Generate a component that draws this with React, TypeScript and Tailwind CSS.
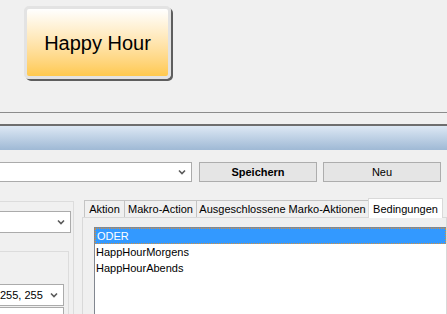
import React from "react";

function Chevron({ className = "" }: { className?: string }) {
	return (
		<svg width="8" height="6" viewBox="0 0 8 6" className={className}>
			<path d="M1 1.5 L4 4.5 L7 1.5" stroke="#5a5a5a" strokeWidth="1.6" fill="none" />
		</svg>
	);
}

function Combo({
	width,
	height,
	text,
}: {
	width: string;
	height: string;
	text?: string;
}) {
	return (
		<div
			className={`${width} ${height} bg-white border border-l-0 border-[#ababab] flex items-center justify-between pr-[5px]`}
		>
			<span className="text-[11px] text-black leading-none">{text}</span>
			<Chevron />
		</div>
	);
}

const tabs = [
	{ label: "Aktion", w: "w-[41px]" },
	{ label: "Makro-Action", w: "w-[73px]" },
	{ label: "Ausgeschlossene Marko-Aktionen", w: "w-[173px]" },
];

const items = ["ODER", "HappHourMorgens", "HappHourAbends"];

export default function App() {
	return (
		<div className="w-[447px] h-[314px] overflow-hidden bg-[#f0f0f0] font-['Liberation_Sans',Arial,sans-serif] text-[11px] text-black">
			{/* top area with the big button */}
			<div className="h-[112px] pt-[6px] pl-[24px]">
				<div className="w-[147px] h-[73px] rounded-[5px] border-[3px] border-[#e3e3e3] shadow-[2px_2px_0_#5e5e5e] bg-gradient-to-b from-white to-[#ffc94d] flex items-center justify-center">
					<span className="text-[20px] leading-none text-black">Happy Hour</span>
				</div>
			</div>
			<div className="h-px bg-[#8c8c8c]" />
			<div className="h-[11px]" />
			<div className="h-[2px] bg-[#6e6e6e]" />
			<div className="h-[24px] bg-gradient-to-b from-[#dde8f4] to-[#9fb9d5]" />

			{/* toolbar row */}
			<div className="flex mt-[12px] h-[20px]">
				<Combo width="w-[192px]" height="h-[20px]" />
				<button className="ml-[7px] w-[118px] h-[20px] border border-[#adadad] bg-[#e5e5e5] font-bold text-[11px]">
					Speichern
				</button>
				<button className="ml-[6px] w-[118px] h-[20px] border border-[#adadad] bg-[#e5e5e5] text-[11px]">
					Neu
				</button>
			</div>

			<div className="flex">
				{/* left column */}
				<div className="w-[74px] pt-[19px] shrink-0">
					<div className="w-[74px] border-t border-r border-[#dcdcdc] pt-[9px] h-[120px]">
						<Combo width="w-[71px]" height="h-[22px]" />
						<div className="mt-[18px] w-[69px] border-t border-r border-[#dcdcdc] pt-[32px] h-[80px]">
							<Combo width="w-[64px]" height="h-[22px]" text="255, 255" />
							<div className="mt-px w-[64px] h-[20px] bg-white border border-l-0 border-[#ababab]" />
						</div>
					</div>
				</div>

				{/* tab control */}
				<div className="ml-[8px] w-[365px] shrink-0 pt-[15px]">
					<div className="flex items-end h-[20px] pl-[2px]">
						{tabs.map((t, i) => (
							<div
								key={t.label}
								className={`${t.w} ${i > 0 ? "-ml-px" : ""} h-[17px] border border-b-0 border-[#c4c4c4] bg-[#f0f0f0] flex items-center justify-center whitespace-nowrap`}
							>
								{t.label}
							</div>
						))}
						<div className="relative z-10 -ml-px w-[75px] h-[20px] -mb-px border border-b-0 border-[#d9d9d9] bg-white flex items-start justify-center pt-[2px] whitespace-nowrap">
							Bedingungen
						</div>
					</div>
					<div className="border border-[#d9d9d9] bg-[#f0f0f0] h-[120px] pl-[11px] pt-[9px]">
						<div className="w-[352px] h-[110px] bg-white border-l border-t border-[#828790]">
							{items.map((it, i) => (
								<div
									key={it}
									className={`h-[16px] flex items-center pl-px whitespace-nowrap ${
										i === 0
											? "bg-[#3399ff] text-white border border-dotted border-[#d8913c]"
											: ""
									}`}
								>
									{it}
								</div>
							))}
						</div>
					</div>
				</div>
			</div>
		</div>
	);
}
